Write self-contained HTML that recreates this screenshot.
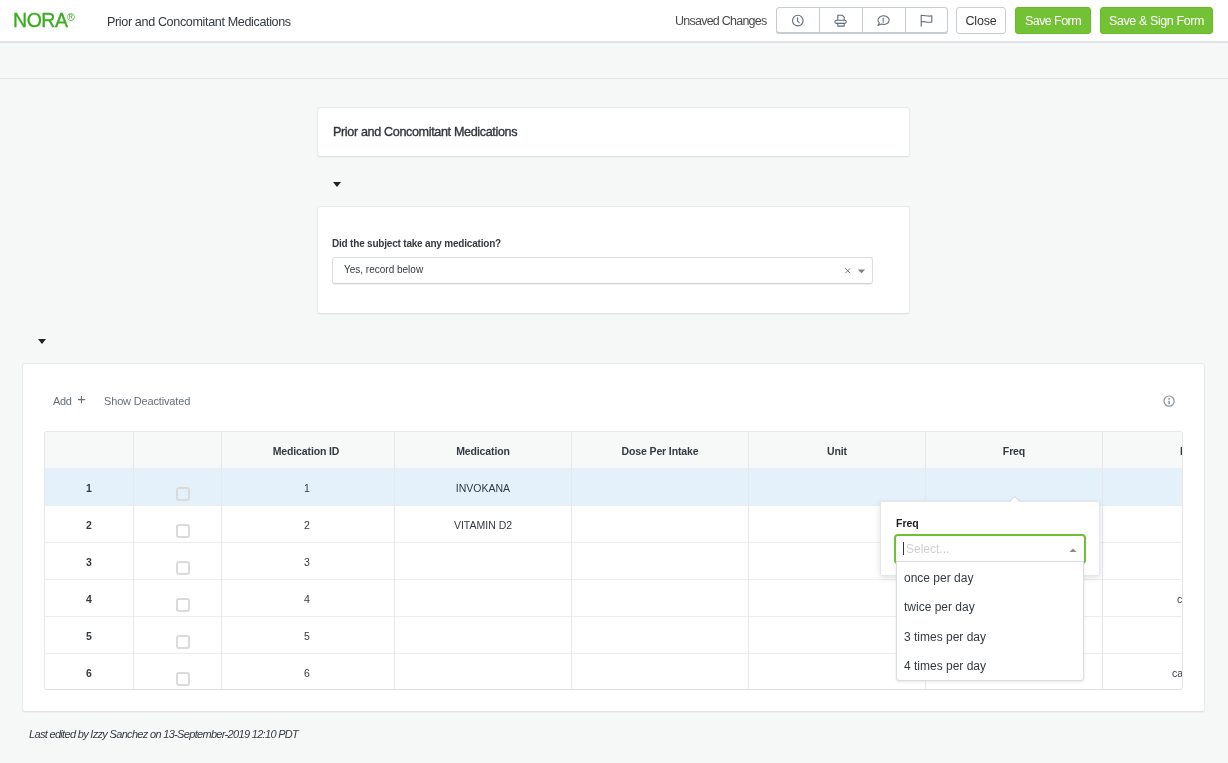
<!DOCTYPE html>
<html><head><meta charset="utf-8">
<style>
*{box-sizing:border-box;margin:0;padding:0}
html,body{width:1228px;height:763px;overflow:hidden}
body{background:#f6f8f8;font-family:"Liberation Sans",sans-serif;color:#333;position:relative;will-change:transform}
.abs{position:absolute;white-space:nowrap}
#hdr{position:absolute;left:0;top:0;width:1228px;height:43px;background:#fff;border-bottom:2px solid #dfe2e6}
#logo{position:absolute;left:13px;top:9px;font-size:19.5px;color:#3aad1f;letter-spacing:-0.45px;-webkit-text-stroke:0.35px #3aad1f}
#reg{position:absolute;left:67px;top:11px;font-size:10.5px;color:#3aad1f}
.bgrp{position:absolute;left:776px;top:7px;width:172px;height:26px;border:1px solid #c5ccd2;border-radius:3px;background:#fff;box-shadow:0 1px 0 #c5ccd2}
.bgrp .dv{position:absolute;top:0;width:1px;height:25px;background:#c5ccd2}
.btn{position:absolute;top:7px;height:27px;border-radius:3px;font-size:12.5px;text-align:center;line-height:29px}
.close{left:956px;width:50px;border:1px solid #c9ced3;background:#fff;color:#333}
.green{background:#73c235;color:#fff;border:1px solid #66bb26;line-height:27px}
#line2{position:absolute;left:0;top:78px;width:1228px;height:1px;background:#e2e5e8}
.card{position:absolute;background:#fff;border:1px solid #e8e9ec;border-bottom-color:#dfe2e5;border-radius:3px;box-shadow:0 1px 1px rgba(0,0,0,0.03)}
.caret{position:absolute;width:0;height:0;border-left:4.5px solid transparent;border-right:4.5px solid transparent;border-top:5px solid #1f2327}
#tbl{position:absolute;left:44px;top:431px;width:1139px;height:259px;border:1px solid #e6e8ec;border-bottom:1px solid #dde1e4;border-radius:3px;overflow:hidden;background:#fff}
.hrow{position:absolute;left:0;top:0;width:1139px;height:36px;background:#f7f8f8}
.selrow{position:absolute;left:0;top:37px;width:1139px;height:36px;background:#e5f1fa}
.hl{position:absolute;left:0;width:1139px;height:1px;background:#e9eeef}
.vl{position:absolute;top:0;width:1px;height:259px;background:#e5e8ec}
.th{position:absolute;top:0;height:36px;line-height:38px;letter-spacing:-0.12px;text-align:center;font-size:10.5px;font-weight:bold;color:#333a40}
.td{position:absolute;height:37px;line-height:38px;text-align:center;font-size:10.5px;color:#333a40}
.cb{position:absolute;width:14px;height:14px;border:2px solid #dadada;border-radius:3px;background:transparent}
</style></head><body>
<div id="hdr">
  <div id="logo">NORA</div><div id="reg">®</div>
  <div class="abs" style="left:107px;top:14.5px;font-size:12.6px;color:#333a40;letter-spacing:-0.37px">Prior and Concomitant Medications</div>
  <div class="abs" style="left:675px;top:14px;font-size:12.5px;color:#4a4a4a;letter-spacing:-0.76px">Unsaved Changes</div>
  <div class="bgrp"><div class="dv" style="left:42px"></div><div class="dv" style="left:85px"></div><div class="dv" style="left:128px"></div>
    <svg class="abs" style="left:0;top:0" width="170" height="25" viewBox="0 0 170 25" fill="none" stroke="#5f6c79" stroke-width="1.1" stroke-linecap="round" stroke-linejoin="round">
      <circle cx="20.8" cy="12.6" r="5.3"/><path d="M20.6 9.8V13.2L22.3 14.7"/>
      <path d="M60.8 11.8V7.2H65.2L67.2 9.2V11.8"/><rect x="57.9" y="12.2" width="11.4" height="3.2" rx="1.6"/><path d="M60.8 15.6V18.1H67.2V15.6"/><circle cx="66.3" cy="13.8" r="0.35" fill="#5f6c79" stroke="none"/>
      <path d="M102.3 14.9A5.6 4.3 0 1 1 104.4 16.1L100.9 17.4Z"/><path d="M106.2 10V13.3M106.2 14.6V14.7"/>
      <path d="M144.2 7.1V18.3M144.2 7.6C147.3 6.7 151 9.1 154.8 7.8V13.9C151 15.2 147.3 12.8 144.2 13.9"/>
    </svg>
  </div>
  <div class="btn close" style="letter-spacing:-0.2px;line-height:27px">Close</div>
  <div class="btn green" style="left:1015px;width:76px;letter-spacing:-0.57px">Save Form</div>
  <div class="btn green" style="left:1100px;width:113px;letter-spacing:-0.4px">Save &amp; Sign Form</div>
</div>
<div id="line2"></div>

<div class="card" style="left:317px;top:107px;width:593px;height:50px">
  <div class="abs" style="left:15px;top:16.5px;font-size:12.6px;color:#2f363c;-webkit-text-stroke:0.35px #2f363c;letter-spacing:-0.36px">Prior and Concomitant Medications</div>
</div>
<div class="caret" style="left:333px;top:182px"></div>

<div class="card" style="left:317px;top:206px;width:593px;height:108px">
  <div class="abs" style="left:14px;top:31px;font-size:10px;font-weight:bold;color:#333a40;letter-spacing:-0.2px">Did the subject take any medication?</div>
  <div class="abs" style="left:14px;top:50px;width:541px;height:27px;border:1px solid #dcdfe2;border-bottom-color:#cfd3d6;border-radius:3px;box-shadow:0 1px 0 rgba(0,0,0,0.06)">
    <div class="abs" style="left:11px;top:6px;font-size:10px;color:#333a40">Yes, record below</div>
    <svg class="abs" style="left:511px;top:8px" width="24" height="10" viewBox="0 0 24 10"><path d="M1.3 2.3L6.2 7.2M6.2 2.3L1.3 7.2" stroke="#777" stroke-width="1"/><path d="M13.8 3.5H21.2L17.5 7.2Z" fill="#808080"/></svg>
  </div>
</div>
<div class="caret" style="left:38px;top:339px"></div>

<div class="card" style="left:22px;top:363px;width:1183px;height:349px">
  <div class="abs" style="left:30px;top:30.5px;font-size:11px;color:#646f7a;letter-spacing:-0.3px">Add</div>
  <svg class="abs" style="left:54px;top:31px" width="10" height="10" viewBox="0 0 10 10"><path d="M4.5 1V8.2M1 4.6H8.2" stroke="#646f7a" stroke-width="1.2"/></svg>
  <div class="abs" style="left:81px;top:30.5px;font-size:11px;color:#646f7a;letter-spacing:-0.16px">Show Deactivated</div>
  <svg class="abs" style="left:1139px;top:30px" width="14" height="14" viewBox="0 0 14 14"><circle cx="7.1" cy="7.1" r="5.1" fill="none" stroke="#8a949c" stroke-width="1.2"/><circle cx="7.1" cy="4.9" r="0.9" fill="#8a949c"/><path d="M7.1 6.8V10.2" stroke="#8a949c" stroke-width="1.5"/></svg>
</div>

<div id="tbl">
  <div class="hrow"></div>
  <div class="selrow"></div>
  <div class="hl" style="top:36px"></div>
  <div class="hl" style="top:73px"></div>
  <div class="hl" style="top:110px"></div>
  <div class="hl" style="top:147px"></div>
  <div class="hl" style="top:184px"></div>
  <div class="hl" style="top:221px"></div>
  <div class="vl" style="left:88px"></div>
  <div class="vl" style="left:176px"></div>
  <div class="vl" style="left:349px"></div>
  <div class="vl" style="left:526px"></div>
  <div class="vl" style="left:703px"></div>
  <div class="vl" style="left:880px"></div>
  <div class="vl" style="left:1057px"></div>
  <div class="th" style="left:175px;width:172px">Medication ID</div>
  <div class="th" style="left:350px;width:176px">Medication</div>
  <div class="th" style="left:527px;width:176px">Dose Per Intake</div>
  <div class="th" style="left:704px;width:176px">Unit</div>
  <div class="th" style="left:881px;width:176px">Freq</div>
  <div class="th" style="left:1135px;width:20px;text-align:left">I</div>
  <!-- rows -->
  <div class="td" style="left:0;top:37px;width:88px;font-weight:bold">1</div>
  <div class="td" style="left:0;top:74px;width:88px;font-weight:bold">2</div>
  <div class="td" style="left:0;top:111px;width:88px;font-weight:bold">3</div>
  <div class="td" style="left:0;top:148px;width:88px;font-weight:bold">4</div>
  <div class="td" style="left:0;top:185px;width:88px;font-weight:bold">5</div>
  <div class="td" style="left:0;top:222px;width:88px;font-weight:bold">6</div>
  <div class="cb" style="left:131px;top:55px"></div>
  <div class="cb" style="left:131px;top:92px"></div>
  <div class="cb" style="left:131px;top:129px"></div>
  <div class="cb" style="left:131px;top:166px"></div>
  <div class="cb" style="left:131px;top:203px"></div>
  <div class="cb" style="left:131px;top:240px"></div>
  <div class="td" style="left:176px;top:37px;width:172px">1</div>
  <div class="td" style="left:176px;top:74px;width:172px">2</div>
  <div class="td" style="left:176px;top:111px;width:172px">3</div>
  <div class="td" style="left:176px;top:148px;width:172px">4</div>
  <div class="td" style="left:176px;top:185px;width:172px">5</div>
  <div class="td" style="left:176px;top:222px;width:172px">6</div>
  <div class="td" style="left:350px;top:37px;width:176px">INVOKANA</div>
  <div class="td" style="left:350px;top:74px;width:176px">VITAMIN D2</div>
  <div class="td" style="left:1132px;top:148px;width:40px;text-align:left">c</div>
  <div class="td" style="left:1127px;top:222px;width:40px;text-align:left">ca</div>
</div>

<!-- popover -->
<div class="abs" style="left:880px;top:501px;width:220px;height:75px;background:#fff;border:1px solid #e4e6e8;border-radius:2px;box-shadow:0 2px 6px rgba(0,0,0,0.12)"></div>
<svg class="abs" style="left:1006px;top:494px" width="18" height="9" viewBox="0 0 18 9"><path d="M2.8 8.5L8.8 2.5L14.8 8.5" fill="#fff" stroke="#cfd4d8" stroke-width="1"/><rect x="1" y="8" width="16" height="1.5" fill="#fff"/></svg>
<div class="abs" style="left:896px;top:517px;font-size:10.5px;font-weight:bold;color:#222">Freq</div>
<div class="abs" style="left:894px;top:534px;width:192px;height:30px;border:2px solid #71bf33;border-radius:4px;background:#fff">
  <div class="abs" style="left:7px;top:6px;width:1px;height:13px;background:#333"></div>
  <div class="abs" style="left:10px;top:6px;font-size:12px;color:#cdcfd1">Select...</div>
  <svg class="abs" style="left:172px;top:11px" width="10" height="6" viewBox="0 0 10 6"><path d="M1.5 5H8.5L5 1.5Z" fill="#8a8a8a"/></svg>
</div>
<div class="abs" style="left:896px;top:561px;width:188px;height:120px;background:#fff;border:1px solid #dadcdf;border-radius:0 0 3px 3px;box-shadow:0 1px 3px rgba(0,0,0,0.10)">
  <div class="abs" style="left:7px;top:9px;font-size:12px;color:#333a40">once per day</div>
  <div class="abs" style="left:7px;top:38px;font-size:12px;color:#333a40">twice per day</div>
  <div class="abs" style="left:7px;top:67.5px;font-size:12px;color:#333a40">3 times per day</div>
  <div class="abs" style="left:7px;top:97px;font-size:12px;color:#333a40">4 times per day</div>
</div>

<div class="abs" style="left:29px;top:728px;font-size:11px;font-style:italic;color:#333a40;letter-spacing:-0.68px">Last edited by Izzy Sanchez on 13-September-2019 12:10 PDT</div>
</body></html>
